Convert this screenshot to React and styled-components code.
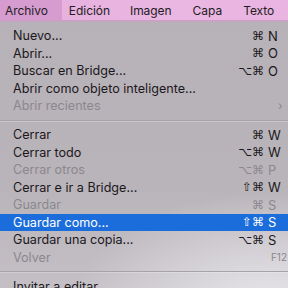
import React from 'react';
import styled, { createGlobalStyle } from 'styled-components';

const GlobalStyle = createGlobalStyle`
    html, body {
        margin:0;
        padding:0;
        background:#b8b3b9;
    }
`

const Screen = styled.div`
    display:flex;
    flex-direction:column;
    width:288px;
    height:288px;
    overflow:hidden;
    font-family:Inter, "Liberation Sans", sans-serif;
    -webkit-font-smoothing:antialiased;
`

const MenuBar = styled.div`
    display:flex;
    flex-shrink:0;
    height:20px;
    background:linear-gradient(90deg, #e5afdc 0%, #eab6e2 60%, #e9b4e1 100%);
    border-bottom:2px solid #c9a3c4;
`

const MenuTitle = styled.div`
    display:flex;
    align-items:center;
    height:100%;
    padding:${props => props.$pad || '0 10.5px'};
    background:${props => props.$active ? '#d79ccf' : 'transparent'};
    color:#231d23;
    font-size:12px;
    letter-spacing:-0.05px;
    white-space:nowrap;
`

const Menu = styled.div`
    flex:1;
    display:flex;
    flex-direction:column;
    padding-top:5px;
    background:
        radial-gradient(ellipse 200px 120px at 270px 290px, rgba(236,234,238,0.95), rgba(236,234,238,0) 100%),
        linear-gradient(180deg, #b7b1b8 0%, #b9b4ba 60%, #c4c0c6 100%);
`

const Item = styled.div`
    display:flex;
    flex-shrink:0;
    align-items:center;
    justify-content:space-between;
    height:17.5px;
    padding:0 0 0 13px;
    font-size:12.6px;
    color:${props => props.$selected ? '#ffffff' : props.$disabled ? '#8b878d' : '#1b181c'};
    background:${props => props.$selected ? '#1c6ddc' : 'transparent'};
`

const Label = styled.span`
    white-space:nowrap;
`

const Shortcut = styled.div`
    display:flex;
    align-items:center;
    font-family:"DejaVu Sans", Inter, sans-serif;
`

const Mods = styled.span`
    font-size:12px;
    text-align:right;
    margin-right:4px;
`

const Key = styled.span`
    width:${props => props.$small ? 'auto' : '20px'};
    font-family:Inter, "Liberation Sans", sans-serif;
    font-size:${props => props.$small ? '10px' : '13px'};
    padding-right:${props => props.$small ? '1px' : '0'};
`

const Chevron = styled.span`
    width:10px;
    font-size:12px;
    color:#8b878d;
`

const Separator = styled.div`
    flex-shrink:0;
    height:1px;
    margin:5px 0 5.5px;
    background:#a7a2a8;
    box-shadow:0 1px 0 rgba(255,255,255,0.25);
`

const titles = [
    { label: 'Archivo', active: true, pad: '0 14px 0 5px' },
    { label: 'Edición', pad: '0 10px 0 7px' },
    { label: 'Imagen', pad: '0 10.5px 0 10px' },
    { label: 'Capa' },
    { label: 'Texto' },
];

const groups = [
    [
        { label: 'Nuevo...', mods: '⌘', key: 'N' },
        { label: 'Abrir...', mods: '⌘', key: 'O' },
        { label: 'Buscar en Bridge...', mods: '⌥⌘', key: 'O' },
        { label: 'Abrir como objeto inteligente...' },
        { label: 'Abrir recientes', disabled: true, submenu: true },
    ],
    [
        { label: 'Cerrar', mods: '⌘', key: 'W' },
        { label: 'Cerrar todo', mods: '⌥⌘', key: 'W' },
        { label: 'Cerrar otros', mods: '⌥⌘', key: 'P', disabled: true },
        { label: 'Cerrar e ir a Bridge...', mods: '⇧⌘', key: 'W' },
        { label: 'Guardar', mods: '⌘', key: 'S', disabled: true },
        { label: 'Guardar como...', mods: '⇧⌘', key: 'S', selected: true },
        { label: 'Guardar una copia...', mods: '⌥⌘', key: 'S' },
        { label: 'Volver', key: 'F12', small: true, disabled: true },
    ],
    [
        { label: 'Invitar a editar...' },
    ],
];

function MenuItem({ item }) {
    return (
        <Item $disabled={item.disabled} $selected={item.selected}>
            <Label>{item.label}</Label>
            {item.submenu && <Chevron>›</Chevron>}
            {item.key &&
                <Shortcut>
                    {item.mods && <Mods>{item.mods}</Mods>}
                    <Key $small={item.small}>{item.key}</Key>
                </Shortcut>
            }
        </Item>
    );
}

export default function App() {
    return (
        <Screen>
            <GlobalStyle/>
            <MenuBar>
                {titles.map(t =>
                    <MenuTitle key={t.label} $active={t.active} $pad={t.pad}>{t.label}</MenuTitle>
                )}
            </MenuBar>
            <Menu>
                {groups.map((group, i) =>
                    <React.Fragment key={i}>
                        {i > 0 && <Separator/>}
                        {group.map(item => <MenuItem key={item.label} item={item}/>)}
                    </React.Fragment>
                )}
            </Menu>
        </Screen>
    );
}
